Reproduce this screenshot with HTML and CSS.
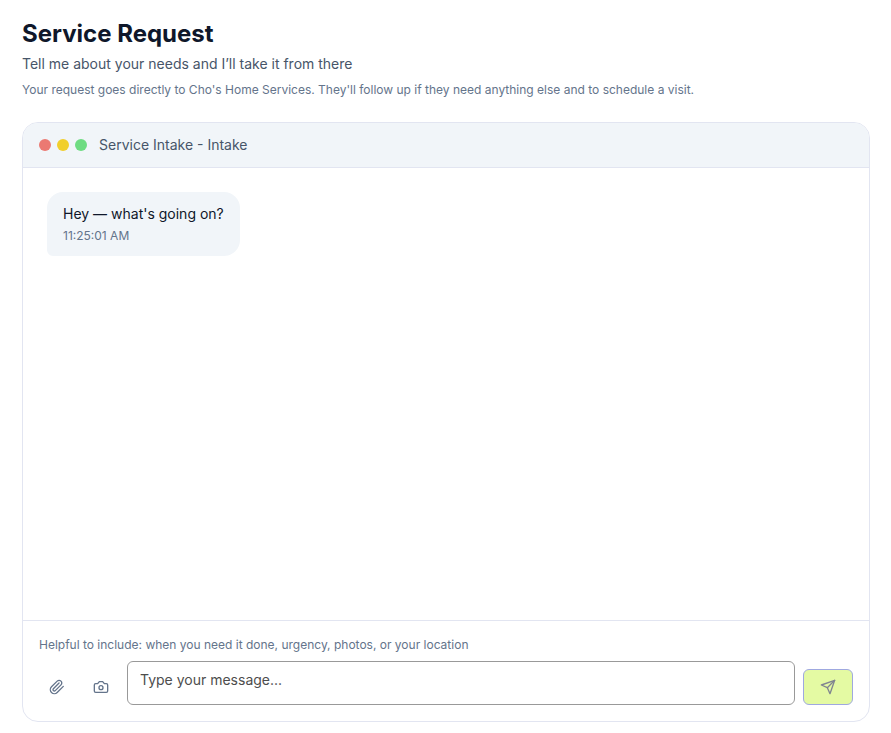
FILE: index.html
```html
<!DOCTYPE html>
<html lang="en">
<head>
  <meta charset="UTF-8">
  <title>Service Request</title>
  <meta name="viewport" content="width=device-width, initial-scale=1.0">
  <link rel="stylesheet" href="styles.css">
</head>
<body>
  <header class="intro">
    <h1>Service Request</h1>
    <p class="lead">Tell me about your needs and I’ll take it from there</p>
    <p class="note">Your request goes directly to Cho's Home Services. They'll follow up if they need anything else and to schedule a visit.</p>
  </header>

  <main class="chat">
    <div class="chat-bar">
      <div class="dots">
        <span class="dot red"></span>
        <span class="dot yellow"></span>
        <span class="dot green"></span>
      </div>
      <h2>Service Intake - Intake</h2>
    </div>

    <div class="messages">
      <div class="bubble">
        <p>Hey — what's going on?</p>
        <time>11:25:01 AM</time>
      </div>
    </div>

    <form class="composer">
      <label class="hint" for="message">Helpful to include: when you need it done, urgency, photos, or your location</label>
      <div class="composer-row">
        <button type="button" class="icon-btn" aria-label="Attach a file">
          <svg viewBox="0 0 24 24"><path d="m21.44 11.05-9.19 9.19a6 6 0 0 1-8.49-8.49l8.57-8.57A4 4 0 1 1 18 8.84l-8.59 8.57a2 2 0 0 1-2.83-2.83l8.49-8.48"/></svg>
        </button>
        <button type="button" class="icon-btn" aria-label="Take a photo">
          <svg viewBox="0 0 24 24"><path d="M14.5 4h-5L7 7H4a2 2 0 0 0-2 2v9a2 2 0 0 0 2 2h16a2 2 0 0 0 2-2V9a2 2 0 0 0-2-2h-3l-2.5-3z"/><circle cx="12" cy="13" r="3"/></svg>
        </button>
        <textarea id="message" rows="1" placeholder="Type your message..."></textarea>
        <button type="submit" class="send-btn" aria-label="Send" disabled>
          <svg viewBox="0 0 24 24"><path d="m22 2-7 20-4-9-9-4Z"/><path d="M22 2 11 13"/></svg>
        </button>
      </div>
    </form>
  </main>
</body>
</html>
```
FILE: styles.css
```css
* {
  box-sizing: border-box;
}
body {
  margin: 0;
  min-height: 100vh;
  padding: 16px 21px 11px 22px;
  display: flex;
  flex-direction: column;
  gap: 24px;
  background: #fff;
  color: #0f172a;
  font-family: Inter, "Liberation Sans", sans-serif;
  font-size: 14px;
  line-height: 20px;
}
h1, h2, p {
  margin: 0;
}
.intro {
  display: flex;
  flex-direction: column;
}
h1 {
  font-size: 24px;
  line-height: 36px;
  font-weight: 700;
}
.lead {
  margin-top: 2px;
  color: #475569;
}
.note {
  margin-top: 8px;
  font-size: 12px;
  line-height: 16px;
  color: #64748b;
}

.chat {
  flex: 1;
  display: flex;
  flex-direction: column;
  border: 1px solid #e2e5f1;
  border-radius: 16px;
  overflow: hidden;
}
.chat-bar {
  display: flex;
  align-items: center;
  gap: 12px;
  padding: 12px 16px;
  background: #f1f5f9;
  border-bottom: 1px solid #e2e5f1;
}
.chat-bar h2 {
  font-size: 14px;
  font-weight: 400;
  color: #475569;
}
.dots {
  display: flex;
  gap: 6px;
}
.dot {
  width: 12px;
  height: 12px;
  border-radius: 50%;
}
.red {
  background: #eb7972;
}
.yellow {
  background: #f1cf2c;
}
.green {
  background: #6edc82;
}

.messages {
  flex: 1;
  display: flex;
  flex-direction: column;
  align-items: flex-start;
  padding: 24px;
}
.bubble {
  padding: 12px 16px;
  background: #f1f5f9;
  border-radius: 16px 16px 16px 6px;
}
.bubble time {
  display: block;
  margin-top: 4px;
  font-size: 12px;
  line-height: 16px;
  color: #64748b;
}

.composer {
  padding: 16px;
  border-top: 1px solid #e2e5f1;
}
.hint {
  display: block;
  margin-bottom: 8px;
  font-size: 12px;
  line-height: 16px;
  color: #64748b;
}
.composer-row {
  display: flex;
  align-items: flex-end;
  gap: 8px;
}
button {
  display: flex;
  align-items: center;
  justify-content: center;
  height: 36px;
  padding: 0;
  border: none;
  background: none;
}
button svg {
  width: 16px;
  height: 16px;
  fill: none;
  stroke: currentColor;
  stroke-width: 2;
  stroke-linecap: round;
  stroke-linejoin: round;
}
.icon-btn {
  width: 36px;
  color: #64748b;
}
textarea {
  flex: 1;
  min-width: 0;
  height: 44px;
  padding: 8px 12px;
  border: 1px solid #999;
  border-radius: 6px;
  background: #fff;
  color: #0f172a;
  font: inherit;
  resize: none;
}
textarea::placeholder {
  color: #4d4d4d;
}
.send-btn {
  width: 50px;
  border: 1px solid #9fa8e0;
  border-radius: 6px;
  background: #e4faa3;
  color: #808590;
}
```
